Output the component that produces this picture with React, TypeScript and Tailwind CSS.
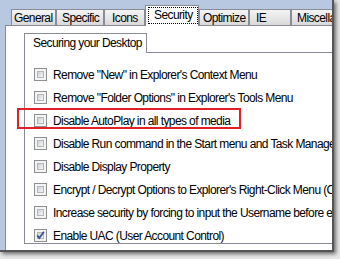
import React from 'react';

const tabs = [
  { label: 'General', box: 'w-[45px] pl-[2px]' },
  { label: 'Specific', box: 'w-[48px] pl-[5px]' },
  { label: 'Icons', box: 'w-[41px] pl-[7px]' },
  { label: 'Security', box: '', selected: true },
  { label: 'Optimize', box: 'w-[50px] pl-[3px]' },
  { label: 'IE', box: 'w-[42px] pl-[6px]' },
  { label: 'Miscellaneous', box: 'w-[69px] pl-[5px]' },
];

const options = [
  { text: 'Remove "New" in Explorer\'s Context Menu', checked: false },
  { text: 'Remove "Folder Options" in Explorer\'s Tools Menu', checked: false },
  { text: 'Disable AutoPlay in all types of media', checked: false },
  { text: 'Disable Run command in the Start menu and Task Manager', checked: false },
  { text: 'Disable Display Property', checked: false },
  { text: 'Encrypt / Decrypt Options to Explorer\'s Right-Click Menu (Context Menu)', checked: false },
  { text: 'Increase security by forcing to input the Username before entering Windows', checked: false },
  { text: 'Enable UAC (User Account Control)', checked: true },
];

const Checkbox: React.FC<{ checked: boolean }> = ({ checked }) => (
  <div className="relative w-[13px] h-[13px] shrink-0 border border-[#8e8f8f] bg-[#f4f4f4] p-[2px]">
    <div className="w-full h-full border border-[#b3b7bc] bg-linear-to-br from-[#cdd1d6] to-[#f6f6f6]" />
    {checked && (
      <svg className="absolute left-0 top-0" width="11" height="11" viewBox="0 0 11 11">
        <path d="M2.2 5.4 L4.3 8 L8.9 1.8" fill="none" stroke="#3a4f95" strokeWidth="1.7" />
      </svg>
    )}
  </div>
);

const App: React.FC = () => {
  return (
    <div className="relative w-[340px] h-[259px] overflow-hidden bg-[#e8e8e8] font-['Liberation_Sans',Arial,sans-serif] text-[12px] leading-[14px] tracking-[-0.6px] text-black">
      {/* clipped window */}
      <div className="w-[334px] h-[252px] flex flex-col overflow-hidden bg-[#b8c8e0] border-r-2 border-b-2 border-[#555555] shadow-[2px_2px_4px_rgba(0,0,0,0.55)]">
        {/* tab strip */}
        <div className="flex items-end h-[25px] pl-[11px] pt-[5px] shrink-0">
          {tabs.map((t) =>
            t.selected ? (
              <div key={t.label} className="relative z-10 w-[54px] h-[21px] -mb-px bg-white border border-b-0 border-[#898c95] pt-px pl-[2px]">
                <span className="block w-[50px] h-[17px] border border-dotted border-black pl-[5px] whitespace-nowrap">{t.label}</span>
              </div>
            ) : (
              <div key={t.label} className={`${t.box} h-[16px] shrink-0 overflow-hidden whitespace-nowrap border border-b-0 border-[#898c95] bg-linear-to-b from-[#f4f4f4] to-[#d9d9d9] pt-[1px]`}>
                {t.label}
              </div>
            )
          )}
        </div>

        {/* page */}
        <div className="flex-1 ml-[5px] bg-white border-l border-t border-[#898c95] overflow-hidden">
          <div className="ml-[18px] mt-[7px] flex flex-col">
            <div className="flex items-end">
              <div className="w-[123px] h-[20px] shrink-0 border border-b-0 border-[#898c95] bg-white pl-[8px] pt-[2px] whitespace-nowrap">
                Securing your Desktop
              </div>
              <div className="flex-1 h-[20px] border-b border-[#898c95]" />
            </div>
            <div className="h-[191px] border-l border-b border-[#898c95] pl-[9px] pt-[15px] flex flex-col gap-[10px]">
              {options.map((o) => (
                <div key={o.text} className="flex items-center gap-[6px] h-[13px] whitespace-nowrap">
                  <Checkbox checked={o.checked} />
                  <span>{o.text}</span>
                </div>
              ))}
            </div>
          </div>
        </div>
      </div>

      {/* annotation */}
      <div className="absolute left-[17px] top-[108px] w-[224px] h-[21px] border-2 border-[#e2202a]" />
    </div>
  );
};

export default App;
